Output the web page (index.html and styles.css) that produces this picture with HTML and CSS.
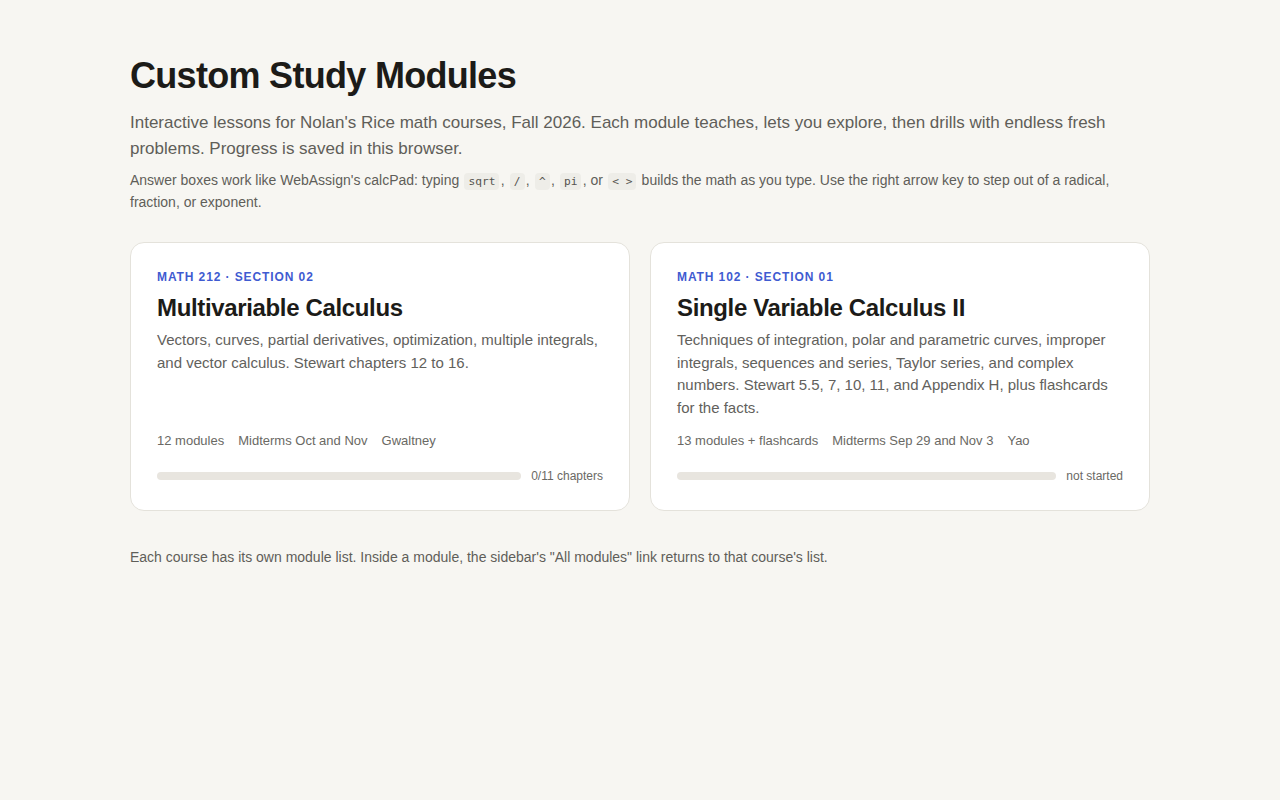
FILE: index.html
```html
<!DOCTYPE html>
<html lang="en">
<head>
<meta charset="utf-8">
<title>Custom Study Modules</title>
<link rel="stylesheet" href="styles.css">
</head>
<body>
<main class="page">
  <h1 class="title">Custom Study Modules</h1>
  <p class="lead">Interactive lessons for Nolan's Rice math courses, Fall 2026. Each module teaches, lets you explore, then drills with endless fresh problems. Progress is saved in this browser.</p>
  <p class="note">Answer boxes work like WebAssign's calcPad: typing <code>sqrt</code>, <code>/</code>, <code>^</code>, <code>pi</code>, or <code>&lt; &gt;</code> builds the math as you type. Use the right arrow key to step out of a radical, fraction, or exponent.</p>
  <section class="cards">
    <a class="card">
      <div class="eyebrow">MATH 212 · SECTION 02</div>
      <h2 class="card-title">Multivariable Calculus</h2>
      <p class="card-desc">Vectors, curves, partial derivatives, optimization, multiple integrals, and vector calculus. Stewart chapters 12 to 16.</p>
      <div class="meta"><span>12 modules</span><span>Midterms Oct and Nov</span><span>Gwaltney</span></div>
      <div class="progress"><div class="bar"></div><span class="plabel">0/11 chapters</span></div>
    </a>
    <a class="card">
      <div class="eyebrow">MATH 102 · SECTION 01</div>
      <h2 class="card-title">Single Variable Calculus II</h2>
      <p class="card-desc">Techniques of integration, polar and parametric curves, improper integrals, sequences and series, Taylor series, and complex numbers. Stewart 5.5, 7, 10, 11, and Appendix H, plus flashcards for the facts.</p>
      <div class="meta"><span>13 modules + flashcards</span><span>Midterms Sep 29 and Nov 3</span><span>Yao</span></div>
      <div class="progress"><div class="bar"></div><span class="plabel">not started</span></div>
    </a>
  </section>
  <p class="foot">Each course has its own module list. Inside a module, the sidebar's "All modules" link returns to that course's list.</p>
</main>
</body>
</html>
```
FILE: styles.css
```css
html, body {
  margin: 0;
  padding: 0;
  background: #f7f6f2;
}
body {
  font-family: "Liberation Sans", Arial, sans-serif;
  color: #1c1b18;
}
.page {
  width: 1020px;
  margin: 0 auto;
  padding-top: 54px;
}
.title {
  margin: 0;
  font-size: 36px;
  line-height: 43px;
  font-weight: 700;
  letter-spacing: -0.7px;
  color: #1c1b18;
}
.lead {
  margin: 13px 0 0;
  font-size: 17px;
  line-height: 26px;
  color: #5f5e59;
}
.note {
  margin: 7px 0 0;
  font-size: 14px;
  line-height: 22px;
  color: #5f5e59;
}
.note code {
  font-family: "DejaVu Sans Mono", "Liberation Mono", monospace;
  font-size: 11.2px;
  line-height: 16px;
  background: #eeede8;
  border-radius: 4px;
  padding: 2px 4px;
  margin: 0 1.3px;
  color: #55544f;
}
.cards {
  margin-top: 29px;
  display: grid;
  grid-template-columns: 1fr 1fr;
  gap: 20px;
}
.card {
  display: flex;
  flex-direction: column;
  background: #ffffff;
  border: 1px solid #e4e2db;
  border-radius: 14px;
  padding: 27px 26px 26px;
  text-decoration: none;
  color: inherit;
}
.eyebrow {
  font-size: 12px;
  line-height: 14px;
  font-weight: 700;
  letter-spacing: 0.9px;
  color: #3f5bd1;
}
.card-title {
  margin: 9px 0 0;
  font-size: 24px;
  line-height: 30px;
  font-weight: 700;
  letter-spacing: -0.35px;
  color: #1c1b18;
}
.card-desc {
  margin: 6px 0 0;
  font-size: 15px;
  line-height: 22.7px;
  color: #62615c;
}
.meta {
  margin-top: auto;
  padding-top: 12px;
  display: flex;
  gap: 14px;
  font-size: 13px;
  line-height: 18px;
  color: #6a6964;
}
.progress {
  margin-top: 18px;
  display: flex;
  align-items: center;
  gap: 10px;
}
.bar {
  flex: 1;
  height: 8px;
  border-radius: 4px;
  background: #e8e5df;
}
.plabel {
  font-size: 12px;
  line-height: 16px;
  color: #6a6964;
}
.foot {
  margin: 36px 0 0;
  font-size: 14px;
  line-height: 20px;
  color: #5f5e59;
}
```
